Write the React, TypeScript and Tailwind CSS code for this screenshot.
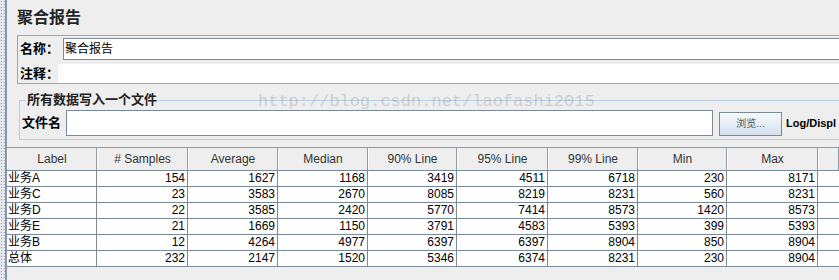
const cjk = "font-['Liberation_Sans','Noto_Sans_CJK_SC',sans-serif]";

const headers = [
  'Label',
  '# Samples',
  'Average',
  'Median',
  '90% Line',
  '95% Line',
  '99% Line',
  'Min',
  'Max',
  '',
];

const rows = [
  ['业务A', '154', '1627', '1168', '3419', '4511', '6718', '230', '8171'],
  ['业务C', '23', '3583', '2670', '8085', '8219', '8231', '560', '8231'],
  ['业务D', '22', '3585', '2420', '5770', '7414', '8573', '1420', '8573'],
  ['业务E', '21', '1669', '1150', '3791', '4583', '5393', '399', '5393'],
  ['业务B', '12', '4264', '4977', '6397', '6397', '8904', '850', '8904'],
  ['总体', '232', '2147', '1520', '5346', '6374', '8231', '230', '8904'],
];

const cols = 'grid grid-cols-[90px_91px_90px_90px_89px_91px_90px_89px_91px_1fr]';

const App = () => {
  return (
    <div
      className={`relative flex h-[280px] w-[839px] overflow-hidden bg-[#eeeeee] text-black ${cjk}`}
    >
      {/* left splitter */}
      <div className="w-[5px] shrink-0 bg-[#e4e8ec] bg-[radial-gradient(#9aa6b3_0.8px,transparent_0.8px)] bg-[length:3px_3px]" />
      <div className="w-[2px] shrink-0 bg-[#8797a8]" />

      <div className="flex min-w-0 flex-1 flex-col">
        {/* title */}
        <div className="h-[35px] shrink-0 pl-[10px] pt-[7px] text-[16px] font-bold leading-[22px] text-[#222]">
          聚合报告
        </div>

        {/* name / comment */}
        <div className="ml-[10px] flex h-[49px] shrink-0 flex-col border-y border-l border-[#a3a3a3]">
          <div className="flex h-[28px] items-start pt-[2px]">
            <span className="w-[45px] shrink-0 whitespace-nowrap pl-[2px] text-[13px] font-bold leading-[22px]">
              名称：
            </span>
            <div className="h-[22px] flex-1 border border-r-0 border-[#7a8a99] bg-white pl-[1px] text-[12px] leading-[20px]">
              聚合报告
            </div>
          </div>
          <div className="flex h-[19px] items-center">
            <span className="w-[40px] shrink-0 whitespace-nowrap pl-[2px] text-[13px] font-bold leading-[19px]">
              注释：
            </span>
            <div className="h-[19px] flex-1 bg-white" />
          </div>
        </div>

        {/* write to file */}
        <fieldset className="ml-[12px] mt-[9px] min-w-0 shrink-0 border border-r-0 border-[#b8cfe5] pb-[3px] pl-[2px]">
          <legend className="ml-[4px] px-[1px] text-[13px] font-bold leading-[14px] text-[#222]">
            所有数据写入一个文件
          </legend>
          <div className="flex items-start whitespace-nowrap pt-[3px]">
            <span className="w-[44px] shrink-0 text-[13px] font-bold leading-[26px]">文件名</span>
            <div className="h-[26px] w-[647px] shrink-0 border border-[#7a8a99] bg-white" />
            <button className="ml-[6px] mt-[2px] h-[24px] w-[63px] shrink-0 border border-[#7a8a99] bg-[linear-gradient(#f6f9fc,#d5e1ed)] text-[10px] leading-[20px] text-[#555]">
              浏览...
            </button>
            <span className="ml-[4px] text-[11px] font-bold leading-[26px]">Log/Displ</span>
          </div>
        </fieldset>

        {/* table */}
        <div className="mt-[7px] shrink-0 border-t border-[#8f9aa6] text-[12px]">
          <div className={`${cols} h-[23px] border-b border-[#7a8a99] bg-[#eeeeee]`}>
            {headers.map((h, i) => (
              <div
                key={i}
                className="border-l border-r border-l-white border-r-[#8f9aa6] text-center leading-[22px] text-[#333]"
              >
                {h}
              </div>
            ))}
          </div>
          {rows.map((r, ri) => (
            <div key={ri} className={`${cols} h-[16px] border-b border-[#7a8a99] bg-white`}>
              {r.map((c, ci) => (
                <div
                  key={ci}
                  className={`border-r border-[#7a8a99] leading-[15px] ${
                    ci === 0 ? 'pl-[1px] text-left' : 'pr-[2px] text-right'
                  }`}
                >
                  {c}
                </div>
              ))}
              <div />
            </div>
          ))}
        </div>
      </div>

      {/* watermark */}
      <div className="pointer-events-none absolute left-[258px] top-[92px] font-['Liberation_Mono',monospace] text-[17px] leading-[20px] text-[rgba(140,140,140,0.35)]">
        http://blog.csdn.net/laofashi2015
      </div>
    </div>
  );
};

export default App;
